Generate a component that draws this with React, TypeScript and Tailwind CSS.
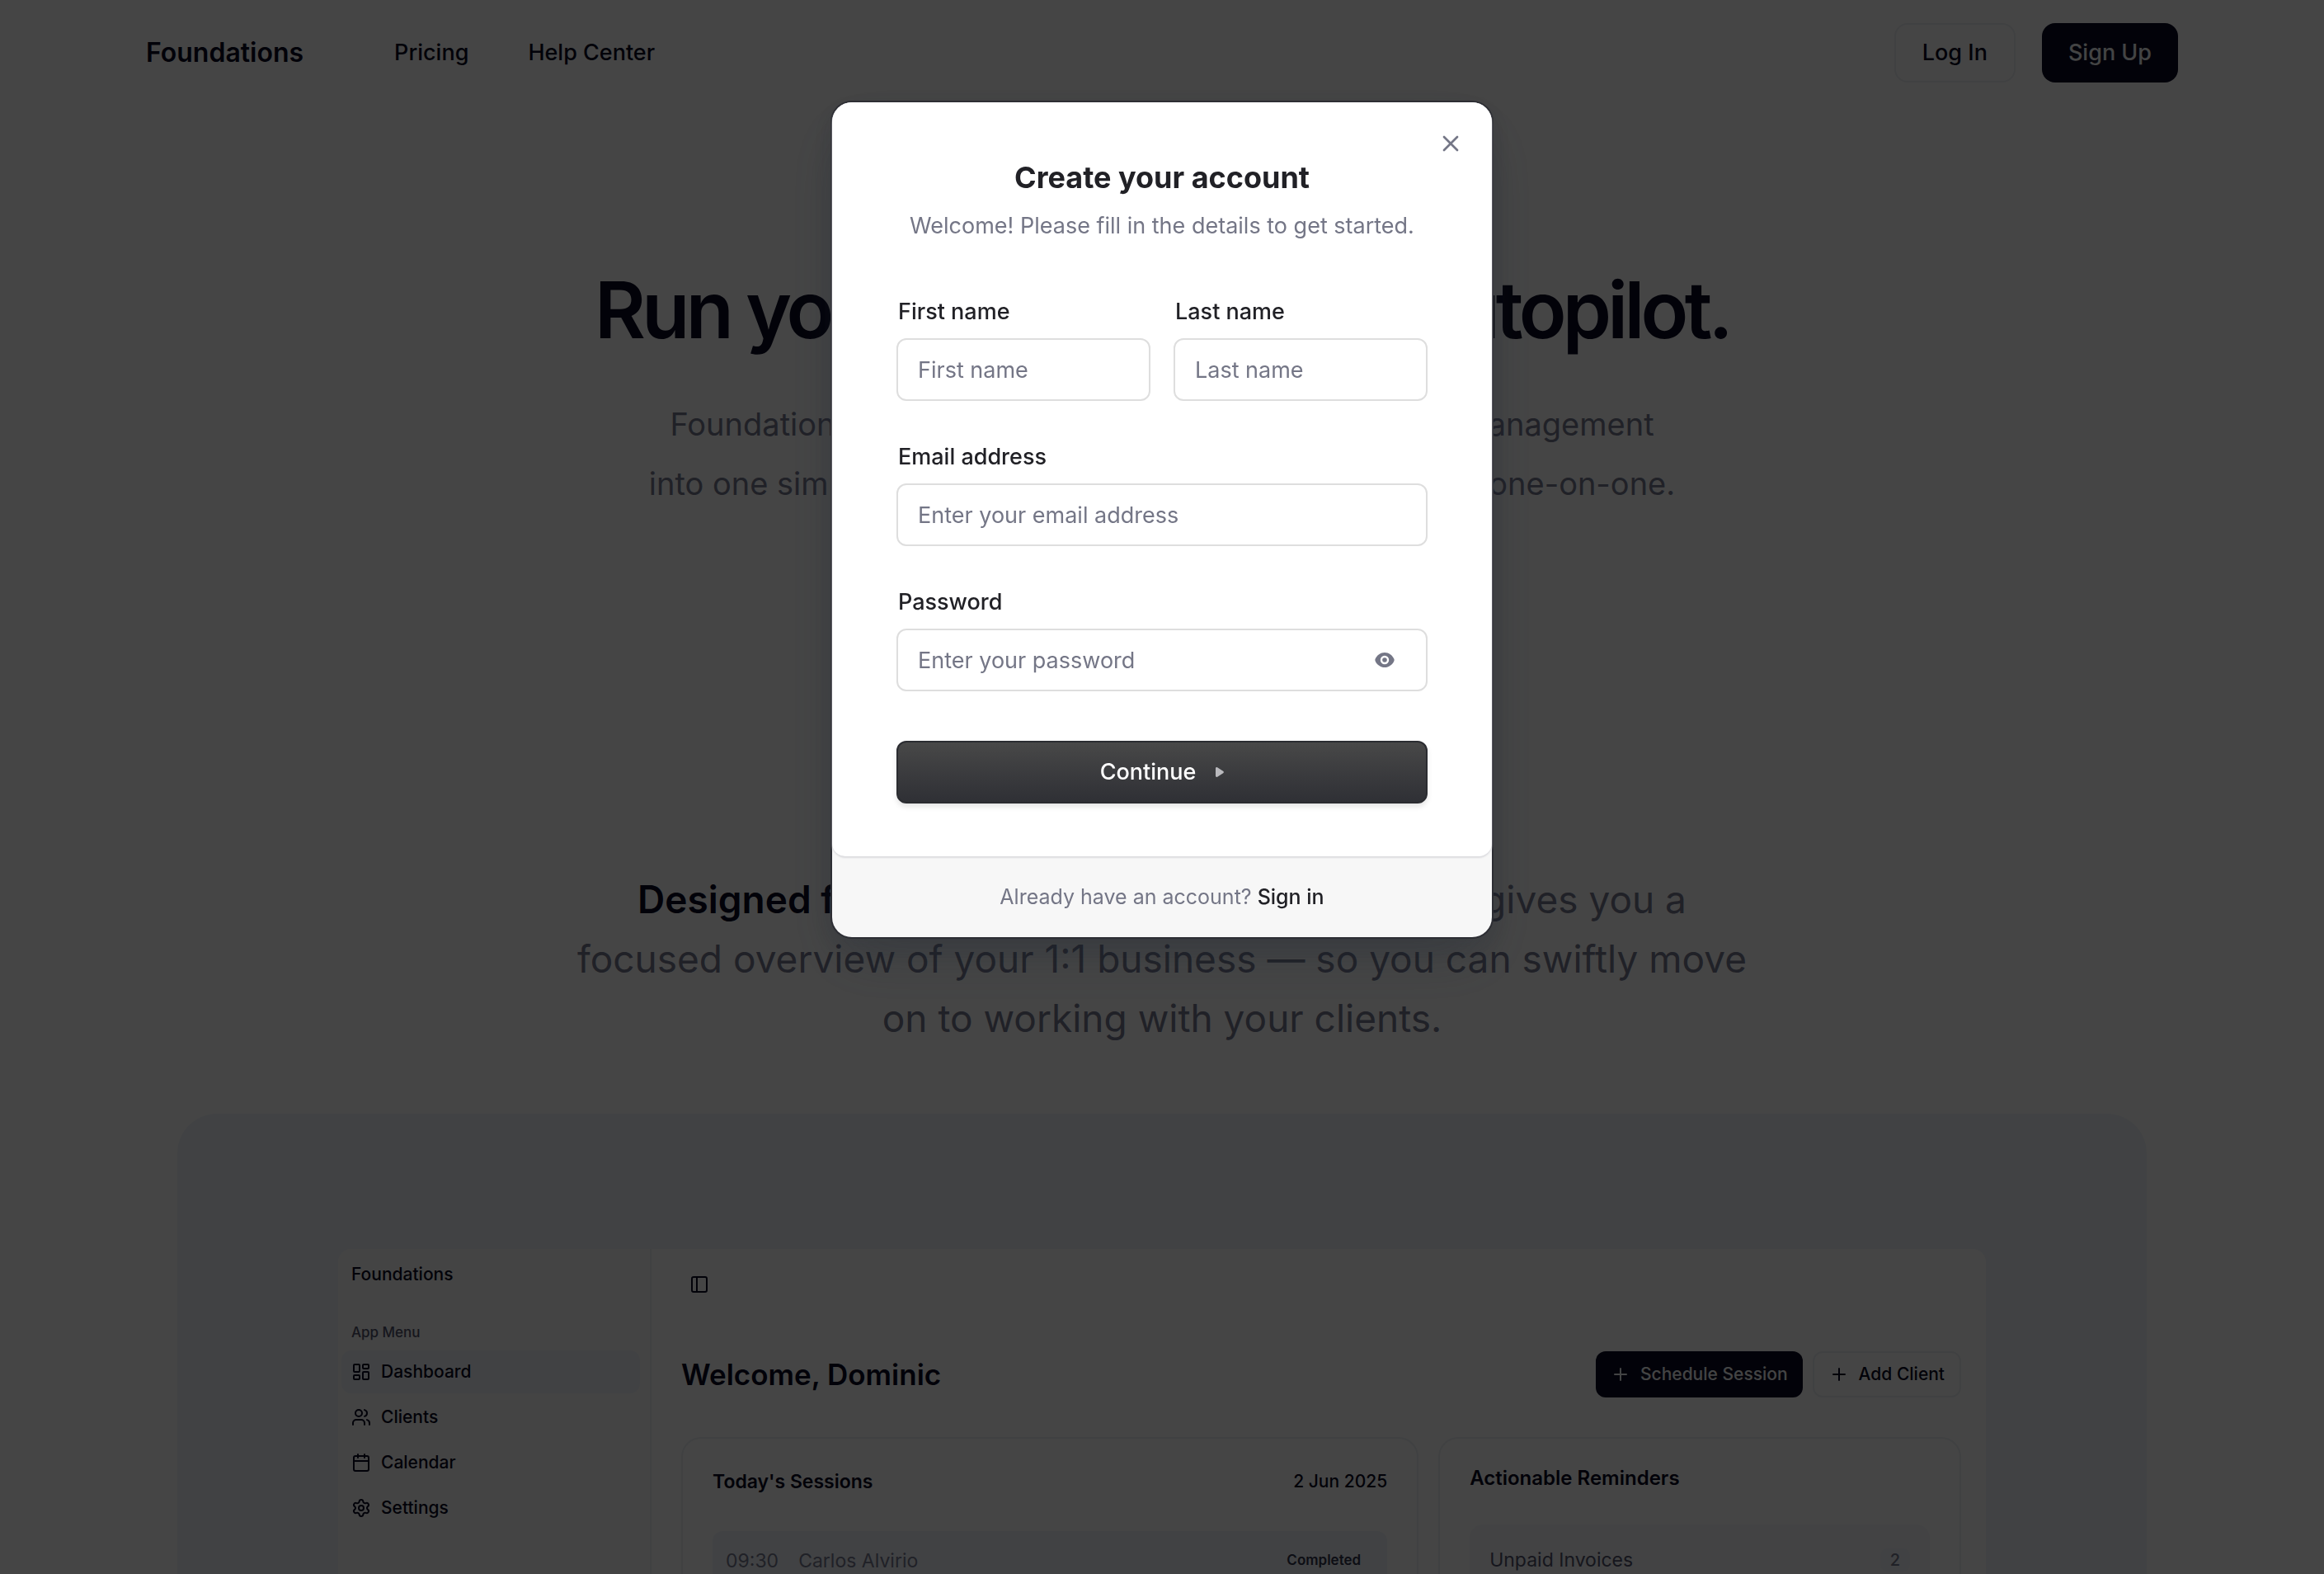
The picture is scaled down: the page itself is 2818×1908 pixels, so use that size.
import { Calendar, LayoutDashboard, PanelLeft, Plus, Settings, Users, X } from "lucide-react";

const menu = [
    { name: "Dashboard", icon: LayoutDashboard, active: true },
    { name: "Clients", icon: Users, active: false },
    { name: "Calendar", icon: Calendar, active: false },
    { name: "Settings", icon: Settings, active: false },
];

function NavBar() {
    return (
        <header className="mx-auto flex w-full max-w-[2464px] items-center py-7 text-[27px] font-medium">
            <a href="#" className="text-[32px] font-semibold">Foundations</a>
            <nav aria-label="Top" className="ml-[110px] flex gap-[72px]">
                <a href="#">Pricing</a>
                <a href="#">Help Center</a>
            </nav>
            <div className="ml-auto flex gap-8">
                <button className="h-18 rounded-2xl border-2 border-[#eceff3] px-8">Log In</button>
                <button className="h-18 rounded-2xl bg-[#080821] px-8 text-slate-50">Sign Up</button>
            </div>
        </header>
    );
}

function Hero() {
    return (
        <section className="mt-[200px] text-center">
            <h1 className="text-[95px] leading-24 font-semibold tracking-tighter">Run your 1:1 practice on autopilot.</h1>
            <p className="mt-[54px] text-[38px] leading-18 text-[#787a92]">
                Foundations bundles scheduling, invoicing and client management
                <br />
                into one simple platform for coaches who prefer to work one-on-one.
            </p>
        </section>
    );
}

function Sidebar() {
    return (
        <aside className="w-[380px] shrink-0 border-r-2 border-[#eceff3] bg-[#fafafa] pt-[15px] pr-3 pl-1">
            <p className="px-3 text-[21px] leading-8 font-medium">Foundations</p>
            <p className="mt-[42px] px-3 text-[17px] leading-6 font-medium text-[#51536b]">App Menu</p>
            <ul className="mt-[10px] flex flex-col gap-[3px] text-[21px] font-medium">
                {menu.map((item) => (
                    <li key={item.name}>
                        <a
                            href="#"
                            className={
                                item.active
                                    ? "flex h-13 items-center gap-3 rounded-xl bg-slate-100 px-3"
                                    : "flex h-13 items-center gap-3 rounded-xl px-3"
                            }
                        >
                            <item.icon className="size-6" aria-hidden="true" />
                            {item.name}
                        </a>
                    </li>
                ))}
            </ul>
        </aside>
    );
}

function Dashboard() {
    return (
        <div className="mx-auto flex w-full max-w-[1998px] overflow-hidden rounded-t-2xl bg-white">
            <Sidebar />
            <div className="min-w-0 flex-1 pt-[31px] pr-[30px] pl-9">
                <button aria-label="Toggle sidebar" className="ml-[10px] block">
                    <PanelLeft className="size-6" aria-hidden="true" />
                </button>

                <div className="mt-[69px] flex items-center">
                    <h2 className="text-[35px] font-semibold">Welcome, Dominic</h2>
                    <div className="ml-auto flex gap-3 text-[21px] font-medium">
                        <button className="flex h-14 items-center gap-3 rounded-xl bg-[#080821] px-[18px] text-slate-50">
                            <Plus className="size-6" aria-hidden="true" />
                            Schedule Session
                        </button>
                        <button className="flex h-14 items-center gap-3 rounded-xl border-2 border-[#eceff3] px-[18px]">
                            <Plus className="size-6" aria-hidden="true" />
                            Add Client
                        </button>
                    </div>
                </div>

                <div className="mt-12 grid grid-cols-[893fr_633fr] gap-6">
                    {/* Sessions */}
                    <section className="rounded-t-3xl border-2 border-b-0 border-[#eceff3] px-9 pt-9">
                        <div className="flex justify-between leading-8">
                            <h3 className="text-[23px] leading-8 font-semibold">Today's Sessions</h3>
                            <span className="text-[21px] font-medium">2 Jun 2025</span>
                        </div>
                        <div className="mt-11 flex h-18 items-center rounded-t-xl bg-slate-100 px-4 text-[23px] text-[#787a92]">
                            <span>09:30</span>
                            <span className="ml-6">Carlos Alvirio</span>
                            <span className="ml-auto rounded-lg px-4 text-[17px] font-semibold text-[#33344d]">Completed</span>
                        </div>
                    </section>
                    {/* Reminders */}
                    <section className="rounded-t-3xl border-2 border-b-0 border-[#eceff3] px-9 pt-8">
                        <h3 className="text-2xl leading-8 font-semibold">Actionable Reminders</h3>
                        <div className="mt-10 flex h-[86px] items-center justify-between rounded-t-2xl bg-[#f6f8fb] px-6 text-[23px] text-[#51536b]">
                            <span>Unpaid Invoices</span>
                            <span className="w-9 rounded-lg bg-slate-100 text-center text-xl font-medium text-[#787a92]">2</span>
                        </div>
                    </section>
                </div>
            </div>
        </div>
    );
}

function Field({ id, label, placeholder, type }: { id: string; label: string; placeholder: string; type: string }) {
    return (
        <div className="min-w-0 flex-1">
            <label htmlFor={id} className="block pl-[2px] leading-10 font-medium">{label}</label>
            <div className="relative mt-3">
                <input
                    id={id}
                    type={type}
                    placeholder={placeholder}
                    className="h-19 w-full rounded-xl border-2 border-[#dedede] bg-white px-6 placeholder:text-[#747686]"
                />
                {type === "password" && (
                    <button type="button" aria-label="Show password" className="absolute top-1/2 right-10 -translate-y-1/2">
                        <svg viewBox="0 0 24 20" className="h-5 w-6" aria-hidden="true">
                            <path
                                fill="#747686"
                                fillRule="evenodd"
                                d="M12 1c5 0 9.400 3.200 11.400 7.800a3 3 0 0 1 0 2.400C21.400 15.800 17 19 12 19S2.600 15.800.6 11.200a3 3 0 0 1 0-2.400C2.600 4.200 7 1 12 1Zm0 3.800a5.200 5.200 0 1 0 0 10.400 5.200 5.200 0 0 0 0-10.400Zm0 2.400a2.800 2.800 0 1 1 0 5.600 2.800 2.800 0 0 1 0-5.600Z"
                            />
                        </svg>
                    </button>
                )}
            </div>
        </div>
    );
}

function SignUpModal() {
    return (
        <div className="fixed inset-0 flex items-start justify-center bg-black/73 pt-[124px]">
            <div
                role="dialog"
                aria-labelledby="modal-title"
                className="relative w-[800px] rounded-3xl bg-[#f7f7f7] text-[27px] text-[#212126] shadow-[0_0_0_2px_#2d2e34,0_30px_70px_-10px_rgba(34,42,53,0.3),0_10px_30px_rgba(34,42,53,0.2)]"
            >
                <button aria-label="Close modal" className="absolute top-8 right-8 p-[2px] text-[#747686]">
                    <X className="size-8" aria-hidden="true" />
                </button>

                <div className="rounded-t-3xl rounded-b-2xl bg-white px-[78px] py-16 shadow-[0_2px_2px_#dcdcdf]">
                    <h2 id="modal-title" className="text-center text-4xl leading-[54px] font-bold">Create your account</h2>
                    <p className="mt-3 text-center leading-10 text-[#747686]">Welcome! Please fill in the details to get started.</p>

                    <form className="mt-16 flex flex-col gap-12">
                        <div className="flex gap-7">
                            <Field id="first" label="First name" placeholder="First name" type="text" />
                            <Field id="last" label="Last name" placeholder="Last name" type="text" />
                        </div>
                        <Field id="email" label="Email address" placeholder="Enter your email address" type="email" />
                        <Field id="password" label="Password" placeholder="Enter your password" type="password" />
                        <button
                            type="button"
                            className="mt-3 flex h-19 items-center justify-center gap-6 rounded-xl border-2 border-[#2b2c31] bg-linear-to-b from-[#484848] to-[#2f3035] font-medium text-white shadow-[0_4px_6px_rgba(0,0,0,0.1)]"
                        >
                            Continue
                            <svg viewBox="0 0 10 12" className="h-3 w-[10px]" aria-hidden="true">
                                <path fill="#b9b9bd" d="M0 1.500C0 .4 1.100-.3 2.100.300l7 4.400a1.500 1.500 0 0 1 0 2.600l-7 4.400C1.100 12.300 0 11.600 0 10.500Z" />
                            </svg>
                        </button>
                    </form>
                </div>

                <p className="py-8 text-center text-[25px] leading-[34px] text-[#747686]">
                    Already have an account?{" "}
                    <a href="#" className="font-medium text-[#212126]">Sign in</a>
                </p>
            </div>
        </div>
    );
}

export default function App() {
    return (
        <div className="h-screen overflow-hidden bg-white font-['Inter',sans-serif] text-[#080821]">
            <NavBar />
            <Hero />
            <section className="mt-[432px]">
                <p className="text-center text-[46px] leading-18 text-[#787a92]">
                    <strong className="font-semibold text-[#080821]">Designed for busy professionals.</strong> Foundations gives you a
                    <br />
                    focused overview of your 1:1 business — so you can swiftly move
                    <br />
                    on to working with your clients.
                </p>
                <div className="mx-auto mt-20 max-w-[2388px] rounded-t-[48px] bg-slate-100 pt-[164px]">
                    <Dashboard />
                </div>
            </section>
            <SignUpModal />
        </div>
    );
}
